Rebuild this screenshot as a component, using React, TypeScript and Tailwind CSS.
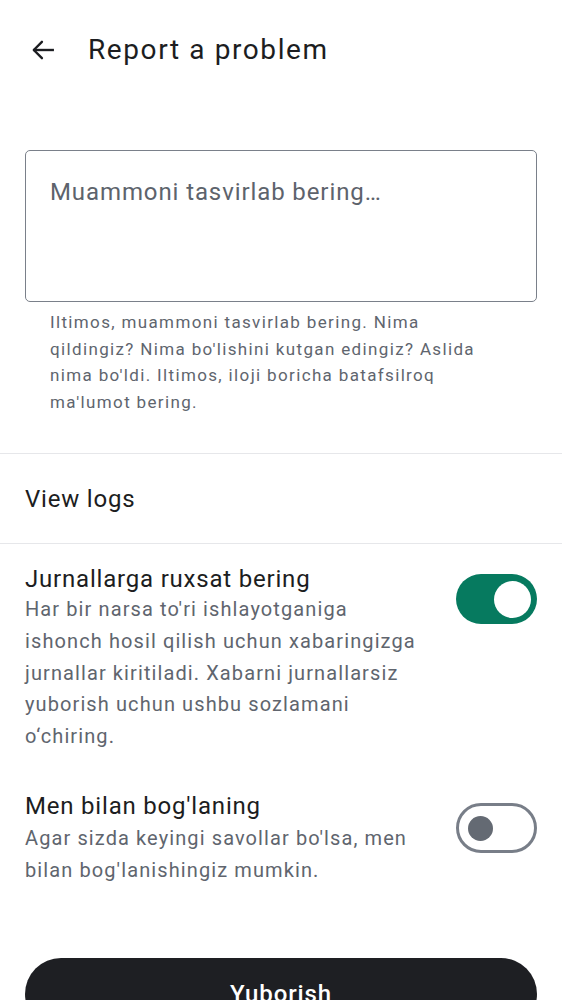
import React from "react";

function Toggle({ on }: { on: boolean }) {
  if (on) {
    return (
      <div className="relative w-[81px] h-[50px] rounded-full bg-[#067a5f] shrink-0">
        <div className="absolute right-[6px] top-[6.5px] w-[37px] h-[37px] rounded-full bg-white" />
      </div>
    );
  }
  return (
    <div className="relative w-[81px] h-[50px] rounded-full border-[3px] border-[#787e88] bg-white shrink-0">
      <div className="absolute left-[9px] top-[9.5px] w-[25px] h-[25px] rounded-full bg-[#646a73]" />
    </div>
  );
}

export default function App() {
  return (
    <div
      className="w-[562px] h-[1000px] overflow-hidden bg-white text-[#1c1d21]"
      style={{ fontFamily: "Roboto, 'Noto Sans', sans-serif" }}
    >
      {/* Header */}
      <div className="h-[100px] flex items-center pl-[30px]">
        <svg width="26" height="26" viewBox="0 0 24 24" fill="none" stroke="#1c1d21" strokeWidth="2.2" strokeLinecap="square">
          <path d="M21 12H4" />
          <path d="M11 4.5L3.5 12L11 19.5" strokeLinecap="round" strokeLinejoin="round" />
        </svg>
        <div className="ml-[32px] text-[28px] leading-[34px] font-normal tracking-[1.6px]">Report a problem</div>
      </div>

      {/* Textarea */}
      <div className="px-[25px] mt-[50px]">
        <div className="h-[152px] rounded-[5px] border-[1.5px] border-[#7a808a] pl-[24px] pt-[26px]">
          <div className="text-[24px] leading-[30px] tracking-[0.9px] text-[#5d636c]">Muammoni tasvirlab bering…</div>
        </div>
        <div className="ml-[25px] w-[450px] mt-[7px] text-[17px] leading-[26.6px] tracking-[1.35px] text-[#60656e]">
          Iltimos, muammoni tasvirlab bering. Nima qildingiz? Nima bo'lishini kutgan edingiz? Aslida nima bo'ldi. Iltimos, iloji boricha batafsilroq ma'lumot bering.
        </div>
      </div>

      <div className="mt-[38px] h-px bg-[#e6e7ea]" />

      <div className="h-[89px] flex items-center px-[25px] text-[24px] tracking-[0.8px]">View logs</div>

      <div className="h-px bg-[#e6e7ea]" />

      {/* Allow logs */}
      <div className="flex items-start px-[25px] pt-[20px] gap-[30px]">
        <div className="flex-1">
          <div className="text-[24px] leading-[30px] tracking-[0.8px]">Jurnallarga ruxsat bering</div>
          <div className="text-[20px] leading-[31.6px] text-[#60656e] tracking-[1.1px]">
            Har bir narsa to'ri ishlayotganiga ishonch hosil qilish uchun xabaringizga jurnallar kiritiladi. Xabarni jurnallarsiz yuborish uchun ushbu sozlamani o‘chiring.
          </div>
        </div>
        <div className="mt-[10px]">
          <Toggle on />
        </div>
      </div>

      {/* Contact me */}
      <div className="flex items-start px-[25px] mt-[39px] gap-[30px]">
        <div className="flex-1">
          <div className="text-[24px] leading-[30px] tracking-[0.8px]">Men bilan bog'laning</div>
          <div className="mt-[2px] text-[20px] leading-[31.6px] text-[#60656e] tracking-[1.1px]">
            Agar sizda keyingi savollar bo'lsa, men bilan bog'lanishingiz mumkin.
          </div>
        </div>
        <div className="mt-[12px]">
          <Toggle on={false} />
        </div>
      </div>

      {/* Button */}
      <div className="px-[25px] mt-[71px]">
        <div className="h-[72px] rounded-full bg-[#1e1f23] flex items-center justify-center text-white text-[24px] tracking-[0.9px] font-medium">
          Yuborish
        </div>
      </div>
    </div>
  );
}
